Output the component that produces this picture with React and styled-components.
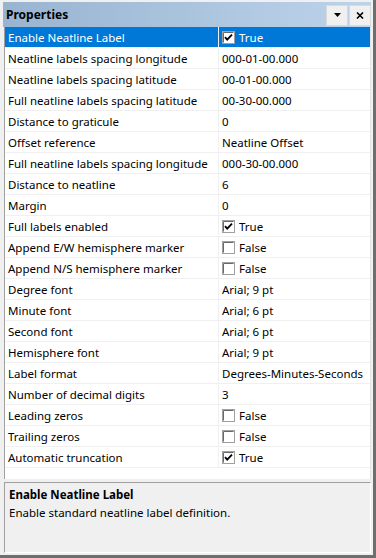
import React from "react";
import styled, { createGlobalStyle } from "styled-components";

const rows = [
  { label: "Enable Neatline Label", value: "True", check: true, selected: true },
  { label: "Neatline labels spacing longitude", value: "000-01-00.000" },
  { label: "Neatline labels spacing latitude", value: "00-01-00.000" },
  { label: "Full neatline labels spacing latitude", value: "00-30-00.000" },
  { label: "Distance to graticule", value: "0" },
  { label: "Offset reference", value: "Neatline Offset" },
  { label: "Full neatline labels spacing longitude", value: "000-30-00.000" },
  { label: "Distance to neatline", value: "6" },
  { label: "Margin", value: "0" },
  { label: "Full labels enabled", value: "True", check: true },
  { label: "Append E/W hemisphere marker", value: "False", check: false },
  { label: "Append N/S hemisphere marker", value: "False", check: false },
  { label: "Degree font", value: "Arial; 9 pt" },
  { label: "Minute font", value: "Arial; 6 pt" },
  { label: "Second font", value: "Arial; 6 pt" },
  { label: "Hemisphere font", value: "Arial; 9 pt" },
  { label: "Label format", value: "Degrees-Minutes-Seconds" },
  { label: "Number of decimal digits", value: "3" },
  { label: "Leading zeros", value: "False", check: false },
  { label: "Trailing zeros", value: "False", check: false },
  { label: "Automatic truncation", value: "True", check: true },
];

function Checkbox({ checked }) {
  return (
    <CheckSvg width="13" height="13" viewBox="0 0 13 13">
      <rect x="0.5" y="0.5" width="12" height="12" fill="#fff" stroke="#a0a0a0" />
      <path d="M1.5 11.5 V1.5 H11.5" fill="none" stroke="#696969" />
      {checked && (
        <path d="M3 6.2 L5.2 8.6 L10 3.6" fill="none" stroke="#000" strokeWidth="1.8" />
      )}
    </CheckSvg>
  );
}

function App() {
  return (
    <>
      <GlobalStyle />
      <Frame>
        <TitleBar>
          <Title>Properties</Title>
          <Buttons>
            <TitleButton>
              <svg width="7" height="4" viewBox="0 0 7 4">
                <path d="M0 0 H7 L3.5 4 Z" fill="#000" />
              </svg>
            </TitleButton>
            <TitleButton>
              <svg width="8" height="7" viewBox="0 0 8 7">
                <path d="M1 0.5 L7 6.5 M7 0.5 L1 6.5" stroke="#000" strokeWidth="1.6" />
              </svg>
            </TitleButton>
          </Buttons>
        </TitleBar>
        <Grid>
          {rows.map((r) => (
            <Row key={r.label} $selected={r.selected}>
              <Label>{r.label}</Label>
              <Value>
                {r.check !== undefined && <Checkbox checked={r.check} />}
                {r.value}
              </Value>
            </Row>
          ))}
        </Grid>
        <Description>
          <DescTitle>Enable Neatline Label</DescTitle>
          <DescText>Enable standard neatline label definition.</DescText>
        </Description>
      </Frame>
    </>
  );
}

export default App;

const GlobalStyle = createGlobalStyle`
  html, body {
    margin: 0;
    padding: 0;
    background: #f0f0f0;
    overflow: hidden;
  }
  * {
    box-sizing: border-box;
  }
`;

const Frame = styled.div`
  width: 376px;
  height: 558px;
  display: flex;
  flex-direction: column;
  padding: 2px 2px 2px 3px;
  background: #f0f0f0;
  border-right: 3px solid #6e6e6e;
  border-bottom: 3px solid #6e6e6e;
  font-family: "Segoe UI", "Noto Sans", sans-serif;
  font-size: 11.5px;
  color: #000;
`;

const TitleBar = styled.div`
  height: 25px;
  flex-shrink: 0;
  display: flex;
  align-items: center;
  justify-content: space-between;
  padding: 0 0 0 3px;
  background: linear-gradient(to right, #99b4d1, #bcd3ea);
`;

const Title = styled.div`
  font-weight: bold;
  font-size: 12px;
`;

const Buttons = styled.div`
  display: flex;
  gap: 1px;
  padding-top: 1px;
`;

const TitleButton = styled.div`
  width: 22px;
  height: 21px;
  display: flex;
  align-items: center;
  justify-content: center;
  background: #f0f0f0;
  border: 1px solid #dadada;
`;

const Grid = styled.div`
  height: 452px;
  flex-shrink: 0;
  margin-left: 1px;
  background: #fff;
  border-left: 1px solid #a0a0a0;
  border-right: 1px solid #e3e3e3;
`;

const Row = styled.div`
  height: 21px;
  display: grid;
  grid-template-columns: 214px 1fr;
  border-bottom: 1px solid #f0f0f0;
  background: ${(p) => (p.$selected ? "#0078d7" : "#fff")};
  color: ${(p) => (p.$selected ? "#fff" : "#000")};
`;

const Label = styled.div`
  display: flex;
  align-items: center;
  padding-left: 3px;
  border-right: 1px solid #f0f0f0;
  white-space: nowrap;
  overflow: hidden;
`;

const Value = styled.div`
  display: flex;
  align-items: center;
  gap: 4px;
  padding-left: 3px;
  white-space: nowrap;
  overflow: hidden;
`;

const CheckSvg = styled.svg`
  flex-shrink: 0;
`;

const Description = styled.div`
  flex: 1;
  margin-top: 3px;
  margin-left: 1px;
  padding: 3px 4px;
  background: #f0f0f0;
  border-top: 1px solid #a0a0a0;
  border-left: 1px solid #a0a0a0;
  border-right: 1px solid #fff;
  border-bottom: 1px solid #fff;
`;

const DescTitle = styled.div`
  font-weight: bold;
  line-height: 18px;
`;

const DescText = styled.div`
  line-height: 18px;
`;
